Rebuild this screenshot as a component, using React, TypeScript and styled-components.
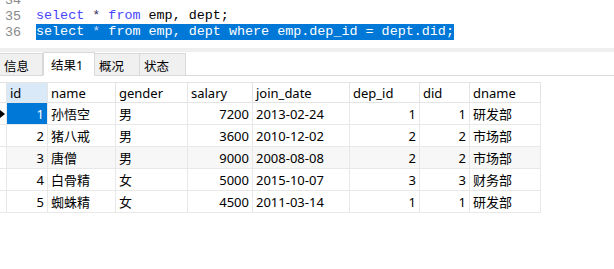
import React from "react";
import styled, { createGlobalStyle } from "styled-components";

const GlobalStyle = createGlobalStyle`
  html, body {
    margin: 0;
    padding: 0;
    background: #ffffff;
    overflow: hidden;
  }
`;

const Page = styled.div`
  width: 614px;
  height: 269px;
  display: flex;
  flex-direction: column;
  background: #ffffff;
  font-family: "Noto Sans", "Noto Sans CJK SC", sans-serif;
`;

const Editor = styled.div`
  height: 48px;
  overflow: hidden;
  display: flex;
  flex-direction: column;
`;

const CodeLines = styled.div`
  margin-top: -8px;
  display: flex;
  flex-direction: column;
`;

const Line = styled.div`
  height: 16px;
  display: flex;
  align-items: center;
  font-family: "Liberation Mono", "Courier New", monospace;
  font-size: 13.4px;
  white-space: pre;
`;

const LineNo = styled.span`
  width: 36px;
  padding-left: 5px;
  box-sizing: border-box;
  color: #8a8a8a;
  flex-shrink: 0;
`;

const Code = styled.span<{ $selected?: boolean }>`
  height: 16px;
  line-height: 16px;
  color: ${({ $selected }) => ($selected ? "#ffffff" : "#000000")};
  background: ${({ $selected }) => ($selected ? "#0078d7" : "transparent")};
`;

const Kw = styled.span<{ $selected?: boolean }>`
  color: ${({ $selected }) => ($selected ? "#ffffff" : "#4646ff")};
`;

const Star = styled.span<{ $selected?: boolean }>`
  color: ${({ $selected }) => ($selected ? "#c8d8ff" : "#30305a")};
`;

const Splitter = styled.div`
  height: 4px;
  background: #efefef;
  flex-shrink: 0;
`;

const TabBar = styled.div`
  height: 23px;
  display: flex;
  align-items: flex-end;
  border-bottom: 1px solid #d9d9d9;
  flex-shrink: 0;
`;

const Tab = styled.div<{ $active?: boolean; $w: number }>`
  width: ${({ $w }) => $w}px;
  height: ${({ $active }) => ($active ? 24 : 22)}px;
  margin-bottom: ${({ $active }) => ($active ? -1 : 0)}px;
  box-sizing: border-box;
  display: flex;
  align-items: center;
  padding-left: ${({ $active }) => ($active ? 7 : 4)}px;
  padding-top: ${({ $active }) => ($active ? 0 : 1)}px;
  font-size: 12.5px;
  color: #000;
  background: ${({ $active }) => ($active ? "#ffffff" : "#f0f0f0")};
  border: 1px solid #d9d9d9;
  border-bottom: ${({ $active }) => ($active ? "1px solid #ffffff" : "none")};
  border-left: ${({ $active }) => ($active ? "1px solid #d9d9d9" : "none")};
`;

const TableArea = styled.div`
  padding-top: 6px;
`;

const COLS = "7px 41px 68px 72px 65px 97px 70px 50px 71px";

const HeaderRow = styled.div`
  display: grid;
  grid-template-columns: ${COLS};
  width: 541px;
  height: 21px;
  border-top: 1px solid #e4e4e4;
  border-bottom: 1px solid #e4e4e4;
  box-sizing: border-box;
`;

const HeadCell = styled.div<{ $active?: boolean }>`
  display: flex;
  align-items: center;
  padding-left: 3px;
  font-size: 13px;
  color: #000;
  background: ${({ $active }) => ($active ? "#d9e9f8" : "#ffffff")};
  border-right: 1px solid #e4e4e4;
  overflow: hidden;
  white-space: nowrap;
`;

const Row = styled.div<{ $alt?: boolean }>`
  display: grid;
  grid-template-columns: ${COLS};
  width: 541px;
  height: 22px;
  box-sizing: border-box;
  border-bottom: 1px solid #e8e8e8;
  background: ${({ $alt }) => ($alt ? "#f7f7f7" : "#ffffff")};
`;

const Cell = styled.div<{ $num?: boolean; $selected?: boolean }>`
  display: flex;
  align-items: center;
  justify-content: ${({ $num }) => ($num ? "flex-end" : "flex-start")};
  padding: 0 3px;
  font-size: 13px;
  color: ${({ $selected }) => ($selected ? "#ffffff" : "#000000")};
  background: ${({ $selected }) => ($selected ? "#0078d7" : "transparent")};
  border-right: 1px solid #e8e8e8;
  white-space: nowrap;
  overflow: hidden;
`;

const Indicator = styled.div`
  display: flex;
  align-items: center;
  border-right: 1px solid #e8e8e8;
  background: #ffffff;
`;

const Arrow = styled.div`
  width: 0;
  height: 0;
  border-top: 4px solid transparent;
  border-bottom: 4px solid transparent;
  border-left: 5px solid #000;
`;

const headers = ["id", "name", "gender", "salary", "join_date", "dep_id", "did", "dname"];

const rows = [
  [1, "孙悟空", "男", 7200, "2013-02-24", 1, 1, "研发部"],
  [2, "猪八戒", "男", 3600, "2010-12-02", 2, 2, "市场部"],
  [3, "唐僧", "男", 9000, "2008-08-08", 2, 2, "市场部"],
  [4, "白骨精", "女", 5000, "2015-10-07", 3, 3, "财务部"],
  [5, "蜘蛛精", "女", 4500, "2011-03-14", 1, 1, "研发部"],
];

const tabs = [
  { label: "信息", w: 43 },
  { label: "结果1", w: 52, active: true },
  { label: "概况", w: 45 },
  { label: "状态", w: 46 },
];

export default function App() {
  return (
    <>
      <GlobalStyle />
      <Page>
        <Editor>
          <CodeLines>
            <Line>
              <LineNo>34</LineNo>
            </Line>
            <Line>
              <LineNo>35</LineNo>
              <Code>
                <Kw>select</Kw> <Star>*</Star> <Kw>from</Kw> emp, dept;
              </Code>
            </Line>
            <Line>
              <LineNo>36</LineNo>
              <Code $selected>
                <Kw $selected>select</Kw> <Star $selected>*</Star> <Kw $selected>from</Kw> emp, dept{" "}
                <Kw $selected>where</Kw> emp.dep_id = dept.did;
              </Code>
            </Line>
          </CodeLines>
        </Editor>
        <Splitter />
        <TabBar>
          {tabs.map((t) => (
            <Tab key={t.label} $w={t.w} $active={t.active}>
              {t.label}
            </Tab>
          ))}
        </TabBar>
        <TableArea>
          <HeaderRow>
            <HeadCell />
            {headers.map((h, i) => (
              <HeadCell key={h} $active={i === 0}>
                {h}
              </HeadCell>
            ))}
          </HeaderRow>
          {rows.map((r, ri) => (
            <Row key={ri} $alt={ri === 2}>
              <Indicator>{ri === 0 && <Arrow />}</Indicator>
              {r.map((v, ci) => (
                <Cell key={ci} $num={typeof v === "number"} $selected={ri === 0 && ci === 0}>
                  {v}
                </Cell>
              ))}
            </Row>
          ))}
        </TableArea>
      </Page>
    </>
  );
}
